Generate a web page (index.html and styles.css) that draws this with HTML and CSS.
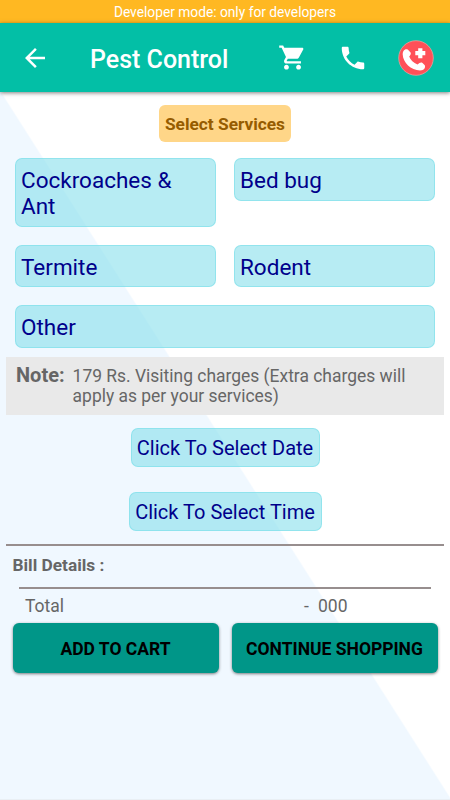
FILE: index.html
```html
<!DOCTYPE html>
<html lang="en">
<head>
<meta charset="utf-8">
<meta name="viewport" content="width=device-width, initial-scale=1">
<title>Pest Control</title>
<link rel="stylesheet" href="styles.css">
</head>
<body>
<div class="status">Developer mode: only for developers</div>
<header class="appbar">
  <svg class="back" viewBox="0 0 24 24"><path d="M20 11H7.83l5.59-5.59L12 4l-8 8 8 8 1.41-1.41L7.83 13H20v-2z"/></svg>
  <h1 class="title">Pest Control</h1>
  <svg class="cart" viewBox="0 0 24 24"><path d="M7 18c-1.1 0-1.99.9-1.99 2S5.9 22 7 22s2-.9 2-2-.9-2-2-2zM1 2v2h2l3.6 7.59-1.35 2.45c-.16.28-.25.61-.25.96 0 1.1.9 2 2 2h12v-2H7.42c-.14 0-.25-.11-.25-.25l.03-.12.9-1.63h7.45c.75 0 1.41-.41 1.75-1.03l3.58-6.49c.08-.14.12-.31.12-.48 0-.55-.45-1-1-1H5.21l-.94-2H1zm16 16c-1.1 0-1.99.9-1.99 2s.89 2 1.99 2 2-.9 2-2-.9-2-2-2z"/></svg>
  <svg class="phone" viewBox="0 0 24 24"><path d="M6.62 10.79c1.44 2.83 3.76 5.14 6.59 6.59l2.2-2.2c.27-.27.67-.36 1.02-.24 1.12.37 2.33.57 3.57.57.55 0 1 .45 1 1V20c0 .55-.45 1-1 1-9.39 0-17-7.61-17-17 0-.55.45-1 1-1h3.5c.55 0 1 .45 1 1 0 1.25.2 2.45.57 3.57.11.35.03.74-.25 1.02l-2.2 2.2z"/></svg>
  <svg class="sos" viewBox="0 0 36 36"><circle cx="18" cy="18" r="17.3"/><path class="handset" d="M5.500 11C6.500 9.300 8.500 8.700 10 9.700L12.600 12.500C13.300 14.300 12 15.500 11.200 16.500C12.500 20 15.500 23 19.500 24.500C21.500 23 22.700 22 24.500 23L26.800 25.300C27.700 27.500 26.500 29.500 24 30.300C14 31.500 5 23 4.700 14.500C4.700 13 4.900 12 5.500 11Z"/><path class="plus" d="M22.300 8.200v10M17.300 13.200h10"/></svg>
</header>
<main class="content">
  <h2 class="badge">Select Services</h2>
  <div class="services">
    <div class="chip">Cockroaches &amp; Ant</div>
    <div class="chip">Bed bug</div>
    <div class="chip">Termite</div>
    <div class="chip">Rodent</div>
    <div class="chip wide">Other</div>
  </div>
  <div class="note"><b>Note:</b><p>179 Rs. Visiting charges (Extra charges will apply as per your services)</p></div>
  <div class="pick date">Click To Select Date</div>
  <div class="pick time">Click To Select Time</div>
  <section class="bill">
    <h3>Bill Details :</h3>
    <div class="total"><span>Total</span><span class="dash">-</span><span>000</span></div>
  </section>
  <div class="actions"><button>ADD TO CART</button><button>CONTINUE SHOPPING</button></div>
</main>
</body>
</html>
```
FILE: styles.css
```css
* { box-sizing: border-box; }
body {
  margin: 0;
  height: 800px;
  overflow: hidden;
  display: flex;
  flex-direction: column;
  font-family: Roboto, "Liberation Sans", sans-serif;
  color: #666;
  background: #fff;
}
h1, h2, h3, p { margin: 0; }
.status {
  height: 23px;
  flex: none;
  background: #ffb822;
  color: #fff;
  font-size: 13.75px;
  line-height: 25px;
  text-align: center;
}
.appbar {
  height: 69px;
  flex: none;
  display: flex;
  align-items: center;
  background: #03bfa6;
  box-shadow: 0 1px 4px rgba(0, 0, 0, .5);
  z-index: 1;
}
.appbar svg { flex: none; fill: #fff; }
.back { width: 30px; height: 30px; margin-left: 20px; }
.title {
  width: 186px;
  margin-left: 40px;
  padding-top: 4px;
  font-size: 25px;
  font-weight: 500;
  line-height: 30px;
  color: #fff;
}
.cart { width: 29px; height: 29px; margin-left: 2px; }
.phone { width: 30px; height: 30px; margin-left: 31px; }
.appbar .sos { width: 36px; height: 36px; margin-left: 30px; }
.sos circle { fill: #ff5058; stroke: #f4a5a0; stroke-width: .7; }
.sos .plus { fill: none; stroke: #fff; stroke-width: 4.200; }
.content {
  flex: 1;
  display: flex;
  flex-direction: column;
  align-items: center;
  padding-top: 13px;
  background: linear-gradient(to top right, #f0f8ff 50%, #fff 50.2%);
  border-bottom: 1px solid #e9eff4;
}
.badge {
  width: 132px;
  height: 37px;
  border-radius: 6px;
  background: #ffd688;
  color: #965c00;
  font-size: 17.3px;
  line-height: 39px;
  text-align: center;
}
.services {
  width: 420px;
  margin-top: 16px;
  display: grid;
  grid-template-columns: 1fr 1fr;
  gap: 18px;
  align-items: start;
}
.chip, .pick {
  border: 1px solid rgba(100, 217, 228, .45);
  border-radius: 7px;
  background: rgba(128, 222, 234, .57);
  color: #00008b;
}
.chip {
  padding: 8px 5px 6.500px;
  font-size: 22.500px;
  line-height: 26px;
}
.wide { grid-column: 1 / -1; }
.note {
  width: 438px;
  height: 58px;
  margin-top: 9px;
  padding: 8px 10px;
  display: flex;
  gap: 8px;
  background: #e9e9e9;
  line-height: 20.600px;
  font-size: 17.450px;
}
.note b { font-size: 20px; }
.note p { padding-top: 1px; flex: 1; }
.pick {
  height: 39px;
  padding: 0 5px;
  font-size: 20px;
  line-height: 38px;
  text-align: center;
  white-space: nowrap;
}
.date { width: 189px; margin-top: 13px; }
.time { width: 193px; margin-top: 25px; }
.bill {
  width: 438px;
  height: 79px;
  margin-top: 13px;
  border-top: 2px solid #978e8e;
}
.bill h3 {
  height: 41px;
  padding-left: 6.500px;
  font-size: 17.300px;
  line-height: 39px;
}
.total {
  margin: 0 13px;
  padding-left: 6px;
  display: flex;
  border-top: 2px solid #978e8e;
  font-size: 17.500px;
  line-height: 34px;
}
.total span:first-child { width: 279px; }
.total .dash { width: 14px; }
.actions { display: flex; gap: 13px; }
.actions button {
  width: 206px;
  height: 50px;
  padding: 2px 0 0;
  border: 0;
  border-radius: 6px;
  background: #009688;
  box-shadow: 0 1px 3px rgba(0, 0, 0, .5);
  color: #000;
  font: 700 17.500px/48px Roboto, "Liberation Sans", sans-serif;
  white-space: nowrap;
}
```
